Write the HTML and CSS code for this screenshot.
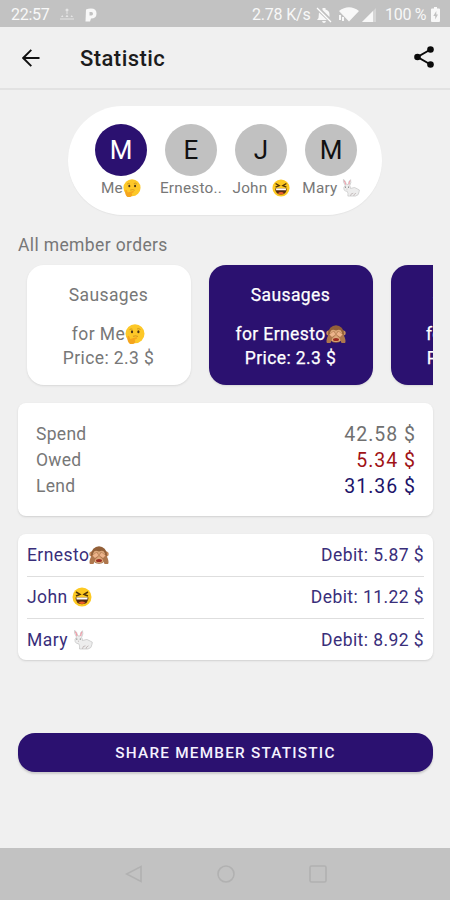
FILE: index.html
```html
<!DOCTYPE html>
<html lang="en">
<head>
<meta charset="utf-8">
<title>Statistic</title>
<link rel="stylesheet" href="styles.css">
</head>
<body>
<svg class="defs" aria-hidden="true">
  <symbol id="thinking" viewBox="0 0 20 20">
    <circle cx="10" cy="9.7" r="9.5" fill="#fdc828"/>
    <path d="M4.500 5.700q1.500-1.300 3-.5M12 5q2-1 3.500.6" fill="none" stroke="#c28b1c" stroke-width=".8"/>
    <ellipse cx="7" cy="7.800" rx="1.100" ry="1.500" fill="#493316"/><ellipse cx="13.400" cy="7.800" rx="1.100" ry="1.500" fill="#493316"/>
    <path d="M8 12.300q3-1 5 .2" fill="none" stroke="#c98a1c" stroke-width=".8"/>
    <path d="M2.500 12.500q1-1.500 2 .5l.8 2 5.700-1.700q1.800 0 .8 1.400l-2.200 1q1.800 2.800-1.400 4.300H5Q2 18 2.500 12.500z" fill="#f5a51d"/>
  </symbol>
  <symbol id="laugh" viewBox="0 0 20 20">
    <circle cx="10" cy="10" r="9.500" fill="#fdc921"/>
    <path d="M4 5l4 2.400-4 1.600M16 5l-4 2.400 4 1.600" fill="none" stroke="#513509" stroke-width="1.500"/>
    <path d="M3.500 10.500h13q-.3 6.700-6.500 6.700t-6.500-6.700z" fill="#552d10"/>
    <path d="M4.500 10.500h11v2h-11z" fill="#fff"/>
    <path d="M6.500 15.700q3.500-2.500 7 0-3.500 2.700-7 0z" fill="#f0602b"/>
  </symbol>
  <symbol id="monkey" viewBox="0 0 20 20">
    <circle cx="2.800" cy="9" r="2.500" fill="#c58d60"/><circle cx="17.200" cy="9" r="2.500" fill="#c58d60"/>
    <ellipse cx="10" cy="10" rx="8" ry="8.800" fill="#936039"/>
    <path d="M4 9q1-5 6-2.500Q15 4 16 9l.5 5q-1.500 4-6.500 4t-6.500-4z" fill="#dba77a"/>
    <path d="M.5 18q0-5 2.500-7.500L7.500 7q2.500.5 2 4.500l-3 2.500-2 5H1zM19.500 18q0-5-2.500-7.500L12.500 7q-2.500.5-2 4.500l3 2.500 2 5H19z" fill="#ae774d"/>
    <path d="M3.500 10.500l4-3q2 1 1.500 3.500l-3 2zM16.500 10.500l-4-3q-2 1-1.500 3.500l3 2z" fill="#edb48b"/>
    <ellipse cx="10" cy="15.500" rx="3" ry="1.600" fill="#9c2d20"/>
  </symbol>
  <symbol id="rabbit" viewBox="0 0 20 20">
    <path d="M3.500 7Q.8 3 1.500.5q2 0 3.500 5.500l2 0Q7.500 1.500 9.500.7q1.200 3-.9 6.800 1.200 1.500.8 3 5-2.500 8.300.8 2.500.2 1.300 3-.2 4-4 4.700H6.500q.5-3.500-.7-5.200Q1.500 13.500 2 9.500z" fill="#ededed" stroke="#bababa" stroke-width=".6"/>
    <path d="M2.200 1.700q1.300 1.300 1.800 4.500M9 2Q7.800 3 7.800 6" fill="none" stroke="#f398a5" stroke-width="1.100"/>
    <circle cx="3.800" cy="9" r=".6" fill="#555"/><circle cx="7.300" cy="9" r=".6" fill="#555"/>
    <path d="M5 11.200h1M9.500 18.800q0-3 3-3M13 18.800q0-2 2.500-3" fill="none" stroke="#b2a5a5" stroke-width=".7"/>
  </symbol>
</svg>
<div class="screen">
  <header class="status">
    <span class="clock">22:57</span>
    <svg class="alarm" viewBox="0 0 14 14"><circle cx="7" cy="2" r="1.500"/><path d="M6.500 3.500h1V6h-1zM1 9l1.200-2L3.500 9zM5.500 9L7 6.500 8.500 9zM10.500 9l1.300-2L13 9zM0 10.500h14v1H0z"/></svg>
    <svg class="pbadge" viewBox="0 0 12 14"><path fill-rule="evenodd" d="M1 1.500Q3 .5 6 .5q5.500 0 5.500 5T6 10.500l-1 3H.5zM4.500 4v3.500h2q1.500-.2 1.500-1.800T6.500 4z"/></svg>
    <span class="speed">2.78 K/s</span>
    <svg class="bell" viewBox="0 0 16 16"><path d="M6.500 1h3v1.500q4 1 4 5V10l-7-7zM3 5.500L11 13H1l1.500-2zM6 14h4q-.5 2-2 2t-2-2z"/><path d="M1 1l14 14" stroke="#fff" stroke-width="1.300"/></svg>
    <svg class="wifi" viewBox="0 0 20 15"><path d="M0 4Q10-3.500 20 4l-10 10.500zM0 8h2v5H0zM3 10h2v4H3z"/></svg>
    <svg class="signal" viewBox="0 0 14 14"><path opacity=".35" d="M0 14L14 0v14z"/><path d="M0 14L11 3v11z"/></svg>
    <span class="percent">100 %</span>
    <svg class="battery" viewBox="0 0 9 15"><path fill-rule="evenodd" d="M3 0h3v1.500h2Q9 1.500 9 2.500V14q0 1-1 1H1q-1 0-1-1V2.500q0-1 1-1h2zM5.300 4L2.300 9h1.900v3.500L7 7.500H5.300z"/></svg>
  </header>
  <div class="appbar">
    <svg class="back" viewBox="0 0 18 18"><path d="M9.300.8L1.200 9l8.100 8.200M1.500 9h16" fill="none" stroke="#111" stroke-width="1.900"/></svg>
    <h1>Statistic</h1>
    <svg class="share" viewBox="0 0 20 22"><path d="M16.500 3.500L3.500 11l13 7.500" fill="none" stroke="#0a0a0a" stroke-width="2"/><circle cx="16.500" cy="3.500" r="3.300"/><circle cx="3.500" cy="11" r="3.300"/><circle cx="16.500" cy="18.500" r="3.300"/></svg>
  </div>
  <main>
    <section class="members">
      <div class="member active"><b>M</b><span>Me<svg><use href="#thinking"/></svg></span></div>
      <div class="member"><b>E</b><span>Ernesto..</span></div>
      <div class="member"><b>J</b><span>John <svg><use href="#laugh"/></svg></span></div>
      <div class="member"><b>M</b><span>Mary <svg><use href="#rabbit"/></svg></span></div>
    </section>
    <h2>All member orders</h2>
    <section class="orders">
      <article class="order"><h3>Sausages</h3><p>for Me<svg><use href="#thinking"/></svg></p><p>Price: 2.3 $</p></article>
      <article class="order chosen"><h3>Sausages</h3><p>for Ernesto<svg><use href="#monkey"/></svg></p><p>Price: 2.3 $</p></article>
      <article class="order chosen"><h3>Sausages</h3><p>for John <svg><use href="#laugh"/></svg></p><p>Price: 2.3 $</p></article>
    </section>
    <section class="summary">
      <div class="sum"><span>Spend</span><strong>42.58 $</strong></div>
      <div class="sum owed"><span>Owed</span><strong>5.34 $</strong></div>
      <div class="sum lend"><span>Lend</span><strong>31.36 $</strong></div>
    </section>
    <section class="debts">
      <div class="debt"><span>Ernesto<svg><use href="#monkey"/></svg></span><span>Debit: 5.87 $</span></div>
      <div class="debt"><span>John <svg><use href="#laugh"/></svg></span><span>Debit: 11.22 $</span></div>
      <div class="debt"><span>Mary <svg><use href="#rabbit"/></svg></span><span>Debit: 8.92 $</span></div>
    </section>
    <button type="button">SHARE MEMBER STATISTIC</button>
  </main>
  <nav>
    <svg viewBox="0 0 18 18"><path d="M16 1.500v15L1.500 9z"/></svg>
    <svg viewBox="0 0 18 18"><circle cx="9" cy="9" r="8"/></svg>
    <svg viewBox="0 0 18 18"><rect x="1" y="1" width="16" height="16" rx="1.500"/></svg>
  </nav>
</div>
</body>
</html>
```
FILE: styles.css
```css
* { box-sizing: border-box; }
body { margin: 0; font-family: Roboto, sans-serif; color: #777; background: #f0f0f0; }
h1, h2, h3, p { margin: 0; font-weight: 400; }
svg { display: block; flex: none; }
.defs { display: none; }
.screen { width: 450px; height: 900px; display: flex; flex-direction: column; overflow: hidden; }
.status { height: 27px; background: #c2c2c2; color: #f8f8f8; display: flex; align-items: center; padding: 2px 10px 0 11px; font-size: 16px; line-height: 25px; }
.status svg { fill: #f8f8f8; }
.clock { width: 49px; letter-spacing: -0.3px; }
.alarm { width: 14px; height: 14px; opacity: .65; }
.pbadge { width: 12px; height: 14px; margin-left: 11px; }
.speed { margin-left: auto; width: 64px; white-space: nowrap; letter-spacing: -0.2px; }
.bell { width: 16px; height: 16px; }
.wifi { width: 20px; height: 15px; margin-left: 7px; }
.signal { width: 14px; height: 14px; margin-left: 3px; }
.percent { margin-left: 9px; width: 46px; white-space: nowrap; letter-spacing: -0.3px; }
.battery { width: 9px; height: 15px; }
.appbar { height: 63px; display: flex; align-items: center; padding: 0 16px 0 22px; border-bottom: 2px solid #e2e2e2; }
.back { width: 18px; height: 18px; }
h1 { margin: 2px 0 0 40px; font-size: 22px; font-weight: 500; letter-spacing: .45px; color: #1c1c1c; flex: 1; }
.share { width: 20px; height: 22px; margin-bottom: 2px; fill: #0a0a0a; }
main { flex: 1; padding: 16px 17px 0 18px; }
.members { width: 314px; height: 109px; margin-left: 50px; padding: 18px 16px 0 18px; background: #fff; border-radius: 55px; display: flex; box-shadow: 0 1px 1px #e5e5e5; }
.member { width: 70px; display: flex; flex-direction: column; align-items: center; }
.member b { width: 52px; height: 52px; border-radius: 50%; background: #c1c1c1; color: #111; font-size: 26px; line-height: 53px; font-weight: 400; text-align: center; }
.member.active b { background: #2b1170; color: #fff; }
.member span { display: flex; align-items: center; white-space: pre; font-size: 15.300px; line-height: 22px; margin-top: 1px; letter-spacing: .25px; }
.member span svg { width: 18px; height: 18px; }
h2 { margin-top: 20px; height: 21px; line-height: 21px; font-size: 17.500px; letter-spacing: .37px; }
.orders { display: flex; gap: 18px; overflow: hidden; padding: 9px 0 3px 8.500px; height: 132px; }
.order { flex: none; width: 164px; height: 120px; border-radius: 17px; background: #fff; text-align: center; padding-top: 18px; font-size: 17.500px; letter-spacing: .4px; line-height: 24px; box-shadow: 0 1px 2px #d8d8d8; }
.order h3 { font-size: 17.500px; line-height: 24px; margin-bottom: 15px; }
.order p { display: flex; justify-content: center; align-items: center; white-space: pre; }
.order p svg, .debt svg { width: 20px; height: 20px; }
.chosen { background: #2b1170; color: #fff; }
.chosen h3, .chosen p { -webkit-text-stroke: .25px #fff; }
.summary { height: 113px; margin-top: 15px; padding: 18px 17px 0 18px; border-radius: 8px; background: #fff; box-shadow: 0 1px 2px #d0d0d0; }
.sum { display: flex; justify-content: space-between; height: 26px; line-height: 26px; font-size: 17.500px; letter-spacing: .3px; }
.sum strong { font-weight: 400; font-size: 19.500px; line-height: 28px; letter-spacing: 1px; color: #707070; }
.sum.owed strong { color: #a01216; }
.sum.lend strong { color: #201369; }
.debts { height: 126px; margin-top: 18px; padding: 0 9px; border-radius: 8px; background: #fff; box-shadow: 0 1px 2px #d0d0d0; }
.debt { display: flex; justify-content: space-between; align-items: center; height: 42.500px; color: #392e7a; font-size: 17.500px; letter-spacing: .42px; border-bottom: 1.500px solid #dedede; }
.debt:last-child { border: 0; }
.debt span { display: flex; align-items: center; white-space: pre; }
button { display: block; width: 100%; height: 39px; margin-top: 73px; border: 0; border-radius: 17px; background: #2b1170; color: #f5f2ff; font: 500 15.300px Roboto, sans-serif; letter-spacing: 1.230px; box-shadow: 0 2px 2px #ccc; }
nav { height: 52px; background: #c2c2c2; display: flex; justify-content: center; align-items: center; gap: 74px; padding-left: 2px; }
nav svg { width: 18px; height: 18px; fill: none; stroke: #b1b1b1; stroke-width: 1.600; }
```
